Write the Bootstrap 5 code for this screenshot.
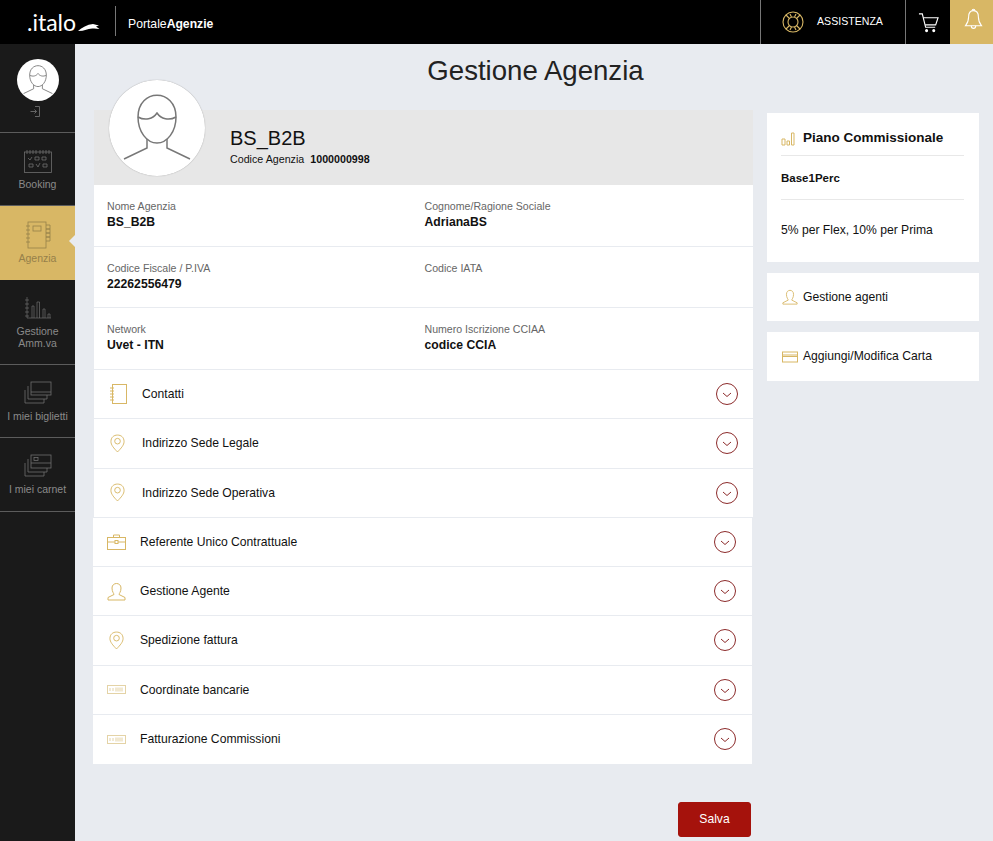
<!DOCTYPE html>
<html lang="it">
<head>
<meta charset="UTF-8">
<meta name="viewport" content="width=device-width, initial-scale=1.0">
<title>Gestione Agenzia - Portale Agenzie</title>
<link href="https://cdn.jsdelivr.net/npm/bootstrap@5.3.0/dist/css/bootstrap.min.css" rel="stylesheet">
<style>
html, body { height: 100%; }
body { background: #e8ebf0; font-family: "Liberation Sans", Arial, sans-serif; color: #111; overflow: hidden; font-size: 12.15px; }
svg { display: block; fill: none; }
.topbar { height: 44px; background: #000; color: #fff; padding: 0; flex-wrap: nowrap; }
.brand-box { padding-left: 27px; width: 115px; height: 44px; }
.brand-text { font-family: Lato, sans-serif; font-weight: 400; font-size: 23px; line-height: 1; color: #fff; }
.brand-bird { margin: 11px 0 0 2px; }
.portal-name { border-left: 1px solid #777; height: 30px; line-height: 36px; padding-left: 12px; font-size: 12.2px; margin-top: -3px; }
.help-box { width: 145px; height: 44px; border-left: 1px solid #777; padding-left: 21px; font-size: 10.6px; gap: 13px; }
.cart-box { width: 45px; height: 44px; border-left: 1px solid #777; }
.bell-box { width: 43px; height: 44px; background: #d8b765; padding: 0 0 6px 3px; }
.side { width: 75px; background: #1a1a1a; flex: none; height: 797px; }
.side-user { height: 89px; border-bottom: 1px solid #5c5c5c; padding-top: 15px; }
.side-avatar { width: 42px; height: 42px; background: #fff; }
.side-exit { margin: 5px 6px 0 0; }
.side-link { color: #8a8a8a; font-size: 10.5px; line-height: 12px; text-align: center; border-bottom: 1px solid #5c5c5c; position: relative; padding-top: 16px; text-decoration: none; }
.side-link:hover { color: #8a8a8a; }
.side-link svg { margin-bottom: 5px; }
.side-on { background: #d8b765; color: #96804a; border-bottom: 0; padding-top: 15px; }
.side-on:hover { color: #96804a; }
.side-on svg { margin-bottom: 3px; }
.side-on::after { content: ""; position: absolute; right: 0; top: 29px; border: 6px solid transparent; border-right-color: #e8ebf0; border-left: 0; }
.page-body { min-width: 0; }
.page-title { font-size: 27.6px; line-height: 34px; font-weight: 400; margin: 0; padding: 10px 0 0 3px; height: 66px; text-align: center; color: #222; }
.cols { padding-left: 18px; gap: 14px; align-items: flex-start; }
.left-col { width: 660px; flex: none; }
.right-col { width: 212px; flex: none; padding-top: 3px; }
.ag-head { background: #e7e7e7; height: 75px; padding-left: 136px; padding-top: 16px; margin-left: 1px; position: relative; }
.ag-name { font-size: 20px; line-height: 24px; }
.ag-code { font-size: 10.7px; line-height: 13px; margin-top: 3px; }
.ag-code b { margin-left: 3px; }
.ag-avatar { position: absolute; left: 15px; top: -30px; width: 96px; height: 96px; background: #fff; box-shadow: 0 0 1px #888; }
.fields { background: #fff; margin-left: 1px; }
.field-row { margin: 0; height: 61.5px; border-bottom: 1px solid #e8ebf0; padding-top: 14px; }
.field-row > div { padding: 0 0 0 13px; }
.field-row > div + div { padding-left: 1px; }
.f-label { color: #666; font-size: 10.6px; line-height: 14px; }
.f-val { font-weight: 700; font-size: 12.2px; line-height: 16px; margin-top: 1px; }
.acc-row { background: #fff; border: 0; border-bottom: 1px solid #e8ebf0; border-radius: 0 !important; color: #111; }
.acc-icon { width: 32px; flex: none; }
.grp-one { margin-left: 1px; }
.grp-one .acc-row { height: 49.5px; padding: 0 15px 0 16px; }
.grp-two { margin-right: 1px; }
.grp-two .acc-row { height: 49.2px; padding: 0 16px 0 14px; }
.grp-two .acc-icon { width: 33px; }
.grp-two .acc-pin { margin-left: 2px; }
.grp-two .acc-row:last-child { border-bottom: 0; }
.acc-circle { width: 22px; height: 22px; flex: none; }
.save-btn { background: #a5120c; border-color: #a5120c; color: #fff; width: 73px; height: 35px; font-size: 12.15px; padding: 0; border-radius: 3px; margin-top: 38px; margin-right: 2px; }
.side-card { background: #fff; border: 0; border-radius: 0; margin-bottom: 11px; }
.plan-card { height: 149px; padding: 0 15px 0 14px; }
.plan-title { font-size: 13.5px; font-weight: 700; height: 43px; border-bottom: 1px solid #e8e8e8; gap: 8px; padding-top: 9px; }
.plan-name { font-size: 11.5px; font-weight: 700; height: 44px; line-height: 44px; border-bottom: 1px solid #e8e8e8; }
.plan-desc { padding-top: 22px; line-height: 16px; }
.link-card { height: 48px; padding-left: 15px; gap: 5px; }
.link-card-tall { height: 49px; }
</style>
</head>
<body>
<nav class="navbar topbar d-flex justify-content-between">
  <div class="d-flex align-items-center">
    <div class="brand-box d-flex align-items-center">
      <span class="brand-text">.italo</span>
      <svg class="brand-bird" width="22" height="9" viewBox="0 0 22 9"><path d="M0 8C4 4.500 9 1.500 15 1L21 2.500 18 3.500 21.500 6C16 5 13 5.500 9 6.500 6 7.500 3 8 0 8Z" fill="#fff"/></svg>
    </div>
    <div class="portal-name">Portale<b>Agenzie</b></div>
  </div>
  <div class="d-flex">
    <div class="help-box d-flex align-items-center">
      <svg width="22" height="22" viewBox="0 0 22 22" stroke="#d8b765" stroke-width="1.100"><circle cx="11" cy="11" r="10"/><circle cx="11" cy="11" r="5"/><path d="M7.500 7.500 4 4M14.500 7.500 18 4M7.500 14.500 4 18M14.500 14.500 18 18M8 3 9.500 6M14 3 12.500 6M8 19 9.500 16M14 19 12.500 16"/></svg>
      <span>ASSISTENZA</span>
    </div>
    <div class="cart-box d-flex align-items-center justify-content-center">
      <svg width="21" height="21" viewBox="0 0 22 22" stroke="#fff" stroke-width="1.200"><path d="M1 2H4.500L8 16H18"/><path d="M5.500 6H21L18.500 13.500H7.500"/><circle cx="9" cy="19.500" r="1" fill="#fff"/><circle cx="16.500" cy="19.500" r="1" fill="#fff"/></svg>
    </div>
    <div class="bell-box d-flex align-items-center justify-content-center">
      <svg width="19" height="23" viewBox="0 0 20 26" stroke="#fff" stroke-width="1.200"><path d="M10 3C6 3 4.500 6 4.500 10 4.500 15 3.500 17 1 20H19C16.500 17 15.500 15 15.500 10 15.500 6 14 3 10 3Z"/><path d="M8.500 3C8.500 .8 11.500 .8 11.500 3M7.500 20C7.500 24 12.500 24 12.500 20"/></svg>
    </div>
  </div>
</nav>

<div class="d-flex">
  <aside class="side d-flex flex-column">
    <div class="side-user d-flex flex-column align-items-center">
      <div class="side-avatar rounded-circle overflow-hidden">
        <svg width="42" height="42" viewBox="0 0 96 96" stroke="#777" stroke-width="2"><path d="M29 37C29 8 67 8 67 37 67 52 58 63 48 63 38 63 29 52 29 37Z"/><path d="M29 37C36 41 44 39 48 33 52 39 60 41 67 37"/><path d="M38 59V68L15 79M58 59V68L81 79"/></svg>
      </div>
      <svg class="side-exit" width="10" height="11" viewBox="0 0 10 11" stroke="#666"><path d="M5 .500H9.500V10.500H5M.5 5.500H6.500M4.500 3.500 6.500 5.500 4.500 7.500"/></svg>
    </div>
    <a class="side-link d-block" href="#" style="height:73px">
      <svg class="mx-auto" width="28" height="24" viewBox="0 0 28 24" stroke="#6e6e6e" stroke-width=".8"><rect x=".5" y="3" width="27" height="20.500"/><path d="M3 1V5M6 1V5M9 1V5M12 1V5M16 1V5M19 1V5M22 1V5M25 1V5M4 9 6 11 8 8M11 8H15V11H11ZM18 8H22V11H18ZM5 15H9V18H5ZM12 15 14 18 16 14M19 15H23V18H19Z"/></svg>
      Booking
    </a>
    <a class="side-link side-on d-block" href="#" style="height:74px">
      <svg class="mx-auto" width="26" height="28" viewBox="0 0 26 28" stroke="#96804a" stroke-width=".8"><rect x="3" y="1" width="18" height="26"/><path d="M1 5H5M1 9H5M1 13H5M1 17H5M1 21H5M21 4H25V8H21M21 8H25V12H21M21 12H25V16H21M21 16H25V20H21"/><rect x="8" y="5" width="8" height="5"/></svg>
      Agenzia
    </a>
    <a class="side-link d-block" href="#" style="height:85px">
      <svg class="mx-auto" width="28" height="24" viewBox="0 0 28 24" stroke="#6e6e6e" stroke-width=".7"><path d="M3 1V22M1 4H5M1 8H5M1 12H5M1 16H5M1 20H5M3 22H27M8 22V10H10V22M13 22V6H15.500V22M19 22V13H21V22M24 22V18H26V22"/></svg>
      Gestione<br>Amm.va
    </a>
    <a class="side-link d-block" href="#" style="height:73px">
      <svg class="mx-auto" width="28" height="24" viewBox="0 0 28 24" stroke="#6e6e6e" stroke-width=".8"><rect x="7" y="1" width="20" height="13"/><path d="M7 11H27M4 5V18H23V14M1 9V22H20V18"/></svg>
      I miei biglietti
    </a>
    <a class="side-link d-block" href="#" style="height:74px">
      <svg class="mx-auto" width="28" height="24" viewBox="0 0 28 24" stroke="#6e6e6e" stroke-width=".8"><rect x="7" y="1" width="20" height="13"/><rect x="10" y="3.500" width="4" height="3"/><path d="M7 9H27M4 5V18H23V14M1 9V22H20V18"/></svg>
      I miei carnet
    </a>
  </aside>

  <main class="page-body flex-grow-1">
    <h1 class="page-title">Gestione Agenzia</h1>
    <div class="cols d-flex">
      <div class="left-col">
        <div class="ag-head">
          <div class="ag-avatar rounded-circle">
            <svg width="96" height="96" viewBox="0 0 96 96" stroke="#777" stroke-width="1.500"><path d="M29 37C29 8 67 8 67 37 67 52 58 63 48 63 38 63 29 52 29 37Z"/><path d="M29 37C36 41 44 39 48 33 52 39 60 41 67 37"/><path d="M38 59V68L15 79M58 59V68L81 79"/></svg>
          </div>
          <div class="ag-name">BS_B2B</div>
          <div class="ag-code">Codice Agenzia <b>1000000998</b></div>
        </div>
        <div class="fields">
          <div class="row field-row">
            <div class="col-6"><div class="f-label">Nome Agenzia</div><div class="f-val">BS_B2B</div></div>
            <div class="col-6"><div class="f-label">Cognome/Ragione Sociale</div><div class="f-val">AdrianaBS</div></div>
          </div>
          <div class="row field-row">
            <div class="col-6"><div class="f-label">Codice Fiscale / P.IVA</div><div class="f-val">22262556479</div></div>
            <div class="col-6"><div class="f-label">Codice IATA</div></div>
          </div>
          <div class="row field-row">
            <div class="col-6"><div class="f-label">Network</div><div class="f-val">Uvet - ITN</div></div>
            <div class="col-6"><div class="f-label">Numero Iscrizione CCIAA</div><div class="f-val">codice CCIA</div></div>
          </div>
        </div>
        <div class="list-group grp-one" id="grpOne"></div>
        <div class="list-group grp-two" id="grpTwo"></div>
        <div class="d-flex justify-content-end">
          <button type="button" class="btn save-btn">Salva</button>
        </div>
      </div>
      <div class="right-col">
        <div class="card side-card plan-card">
          <div class="plan-title d-flex align-items-center">
            <svg width="14" height="14" viewBox="0 0 14 14" stroke="#d8b765"><path d="M1 7H4V13H1ZM6 9H8.500V13H6ZM10.500 1H13V13H10.500Z"/></svg>
            Piano Commissionale
          </div>
          <div class="plan-name">Base1Perc</div>
          <div class="plan-desc">5% per Flex, 10% per Prima</div>
        </div>
        <div class="card side-card link-card d-flex flex-row align-items-center">
          <svg width="16" height="16" viewBox="0 0 18 18" stroke="#d8b765"><path d="M5 6C5 0 13 0 13 6 13 10 11 11.500 11 12.500L17 15.500V17H1V15.500L7 12.500C7 11.500 5 10 5 6Z"/></svg>
          Gestione agenti
        </div>
        <div class="card side-card link-card link-card-tall d-flex flex-row align-items-center">
          <svg width="16" height="12" viewBox="0 0 16 12" stroke="#d8b765"><rect x=".5" y="1" width="15" height="10"/><path d="M.5 4H15.500M.5 5.500H15.500"/></svg>
          Aggiungi/Modifica Carta
        </div>
      </div>
    </div>
  </main>
</div>

<script>
const book = '<svg width="17" height="20" viewBox="0 0 17 20" stroke="#d8b765"><rect x="2.500" y=".5" width="14" height="19"/><path d="M0 4H4M0 7H4M0 10H4M0 13H4M0 16H4"/></svg>';
const pin = '<svg class="acc-pin" width="15" height="19" viewBox="0 0 16 20" stroke="#d8b765"><path d="M8 19C4 15 1 11.500 1 8 1 3.500 4 1 8 1 12 1 15 3.500 15 8 15 11.500 12 15 8 19Z"/><circle cx="8" cy="7.500" r="3"/></svg>';
const brief = '<svg width="19" height="16" viewBox="0 0 19 16" stroke="#d8b765"><rect x=".5" y="3.500" width="18" height="12"/><path d="M6.500 3.500V1H12.500V3.500M.5 8H18.500"/><rect x="8" y="6.500" width="3" height="3" fill="#fff"/></svg>';
const person = '<svg width="19" height="19" viewBox="0 0 19 19" stroke="#d8b765"><path d="M5 6C5 0 14 0 14 6 14 10 12 11.500 12 12.500L18 15.500V18H1V15.500L7 12.500C7 11.500 5 10 5 6Z"/></svg>';
const money = '<svg width="19" height="9" viewBox="0 0 19 9" stroke="#e4d3a6"><rect x=".5" y=".5" width="18" height="8"/><path d="M3 3V6M6 3V6"/><rect x="8" y="2.500" width="8" height="4" fill="#f1e8d0" stroke="none"/></svg>';
const circle = '<svg class="acc-circle" viewBox="0 0 22 22" stroke="#8c2b2b"><circle cx="11" cy="11" r="10.500"/><path d="M7 10 11 13.500 15 10"/></svg>';

function rows(list) {
  return list.map(r => `<div class="list-group-item acc-row d-flex align-items-center">
    <span class="acc-icon">${r[0]}</span><span class="flex-grow-1">${r[1]}</span>${circle}</div>`).join('');
}
document.getElementById('grpOne').innerHTML = rows([
  [book, 'Contatti'],
  [pin, 'Indirizzo Sede Legale'],
  [pin, 'Indirizzo Sede Operativa']
]);
document.getElementById('grpTwo').innerHTML = rows([
  [brief, 'Referente Unico Contrattuale'],
  [person, 'Gestione Agente'],
  [pin, 'Spedizione fattura'],
  [money, 'Coordinate bancarie'],
  [money, 'Fatturazione Commissioni']
]);
</script>
<script src="https://cdn.jsdelivr.net/npm/bootstrap@5.3.0/dist/js/bootstrap.bundle.min.js"></script>
</body>
</html>
